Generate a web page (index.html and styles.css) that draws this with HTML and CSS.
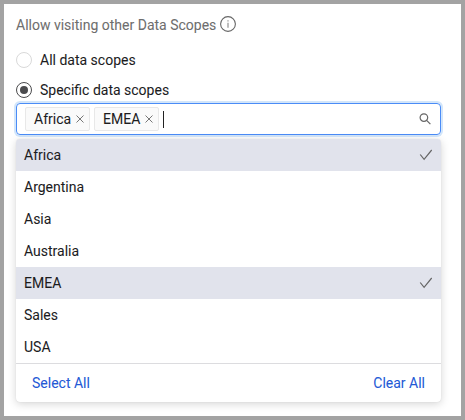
FILE: index.html
```html
<!DOCTYPE html>
<html lang="en">
<head>
<meta charset="utf-8">
<title>Data Scopes</title>
<link rel="stylesheet" href="styles.css">
</head>
<body>
<main class="panel">
  <div class="heading">
    <span>Allow visiting other Data Scopes</span>
    <svg class="info" viewBox="0 0 16 16"><circle cx="8" cy="8" r="7.4"/><path class="info-mark" d="M8 6.8v4.9M8 4.2v1.2"/></svg>
  </div>
  <div class="option"><span class="radio"></span><span>All data scopes</span></div>
  <div class="option"><span class="radio radio-on"></span><span>Specific data scopes</span></div>
  <div class="select">
    <div class="tag"><span>Africa</span><svg class="close" viewBox="0 0 8 8"><path d="M.5.5l7 7M7.5.5l-7 7"/></svg></div>
    <div class="tag"><span>EMEA</span><svg class="close" viewBox="0 0 8 8"><path d="M.5.5l7 7M7.5.5l-7 7"/></svg></div>
    <span class="caret"></span>
    <svg class="search" viewBox="0 0 12 12"><circle cx="4.9" cy="4.6" r="3.8"/><path d="M7.6 7.3l3.8 3.8"/></svg>
  </div>
  <div class="dropdown">
    <div class="item selected"><span>Africa</span><svg class="check" viewBox="0 0 14 12"><path d="M1.2 5.5l3.9 4.9L12.7 1"/></svg></div>
    <div class="item">Argentina</div>
    <div class="item">Asia</div>
    <div class="item">Australia</div>
    <div class="item selected"><span>EMEA</span><svg class="check" viewBox="0 0 14 12"><path d="M1.2 5.5l3.9 4.9L12.7 1"/></svg></div>
    <div class="item">Sales</div>
    <div class="item">USA</div>
    <div class="actions"><span>Select All</span><span>Clear All</span></div>
  </div>
</main>
</body>
</html>
```
FILE: styles.css
```css
* { box-sizing: border-box; }
body { margin: 0; }
.panel {
  width: 465px;
  height: 420px;
  border: 4px solid #a3a3a3;
  padding: 6px 20px 0 12px;
  background: #fff;
  color: #1c1c1e;
  font: 14px/22px Roboto, "Liberation Sans", sans-serif;
  -webkit-text-stroke: 0.06px currentColor;
  overflow: hidden;
}
.heading {
  display: flex;
  align-items: center;
  gap: 4px;
  height: 30px;
  color: #6e6e6e;
}
svg { display: block; fill: none; stroke: #666; flex: none; }
.info { width: 16px; height: 16px; margin-top: -2px; stroke-width: 1.1; }
.info-mark { stroke: #888; }
.option {
  display: flex;
  align-items: center;
  gap: 8px;
  height: 30px;
}
.heading + .option { margin-top: 5px; }
.radio {
  display: flex;
  align-items: center;
  justify-content: center;
  width: 16px;
  height: 16px;
  border: 1px solid #d9d9d9;
  border-radius: 50%;
}
.radio-on { border-color: #4b4b4d; }
.radio-on::after {
  content: "";
  width: 8px;
  height: 8px;
  border-radius: 50%;
  background: #4b4b4d;
}
.select {
  display: flex;
  align-items: center;
  height: 32px;
  margin-top: -2px;
  padding: 0 9px 0 8px;
  border: 1px solid #4a8cf7;
  border-radius: 4px;
  box-shadow: 0 0 0 2px #d3e6fa;
}
.tag {
  display: flex;
  align-items: center;
  justify-content: space-between;
  width: 65px;
  height: 24px;
  margin-right: 4px;
  padding: 0 5px 0 8px;
  border: 1px solid #e8e8e8;
  border-radius: 2px;
  background: #fafafa;
}
.close { width: 8px; height: 8px; stroke: #777; }
.caret { width: 1px; height: 17px; background: #222; }
.search { width: 12px; height: 12px; margin-left: auto; stroke-width: 1.2; }
.dropdown {
  margin-top: 4px;
  border-radius: 4px;
  overflow: hidden;
  background: #fff;
  box-shadow: 0 2px 8px rgba(0, 0, 0, .17), 0 0 1px rgba(0, 0, 0, .15);
}
.item {
  display: flex;
  align-items: center;
  justify-content: space-between;
  height: 32px;
  padding: 0 8px;
}
.selected { background: #e1e3ec; }
.check { width: 14px; height: 12px; stroke-width: 1.2; }
.actions {
  display: flex;
  justify-content: space-between;
  align-items: center;
  height: 39px;
  padding: 0 16px;
  border-top: 1px solid #dcdcdf;
  color: #2459d6;
}
```
